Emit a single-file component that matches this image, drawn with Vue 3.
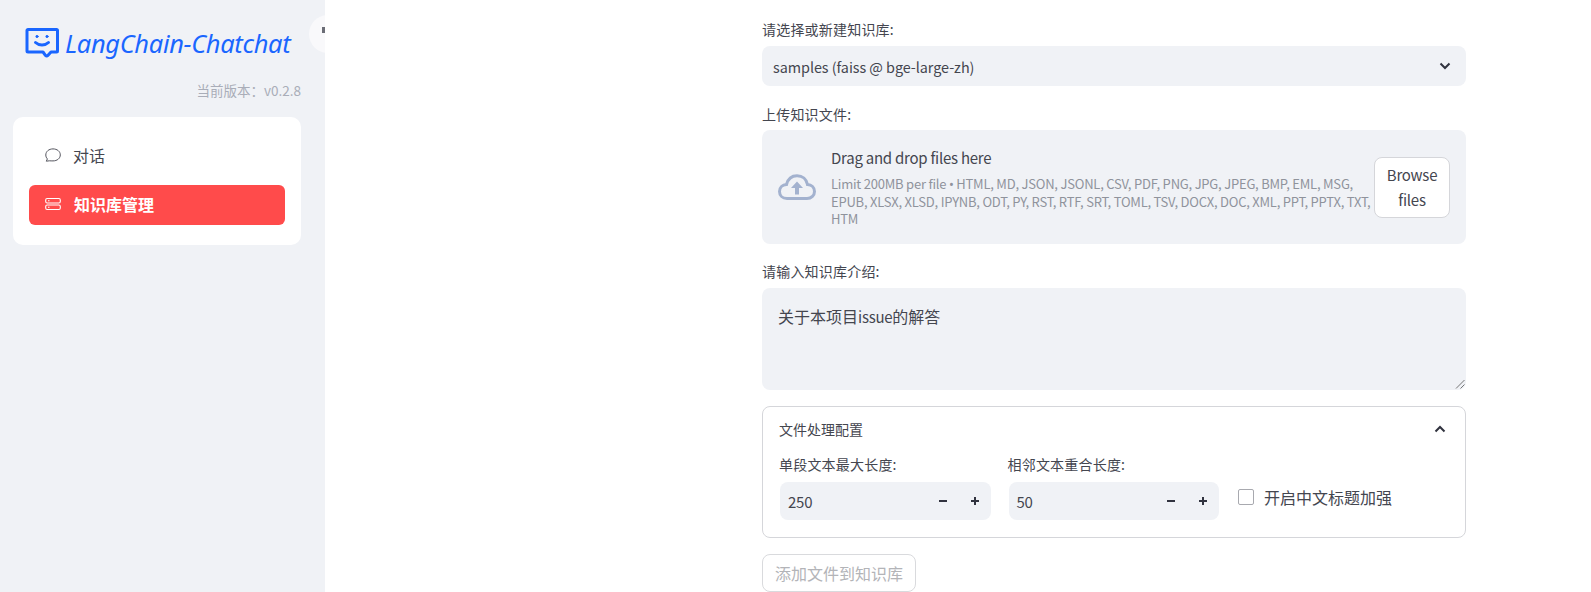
<script setup>
const limitStart = 'Limit 200MB per file'
const limitRest = 'HTML, MD, JSON, JSONL, CSV, PDF, PNG, JPG, JPEG, BMP, EML, MSG, EPUB, XLSX, XLSD, IPYNB, ODT, PY, RST, RTF, SRT, TOML, TSV, DOCX, DOC, XML, PPT, PPTX, TXT, HTM'
const numbers = [
  { label: '单段文本最大长度:', value: '250' },
  { label: '相邻文本重合长度:', value: '50' },
]
</script>

<template>
  <div class="page">
    <aside class="sidebar">
      <div class="collapse"><span class="collapse-mark"></span></div>
      <div class="logo">
        <svg class="logo-icon" viewBox="0 0 34 30" width="34" height="30" fill="none" stroke="#1a66ff" stroke-width="3" stroke-linejoin="round" stroke-linecap="round">
          <path d="M3 1.500H31.500a1 1 0 0 1 1 1V23a1 1 0 0 1-1 1H26l-3.200 3.600a1.500 1.500 0 0 1-2.200 0L18 24H3a1 1 0 0 1-1-1V2.500a1 1 0 0 1 1-1Z" />
          <path d="M10.500 14.500c3.500 3.300 9.500 3.300 13 0" />
          <circle cx="12" cy="8.500" r="1.100" fill="#1a66ff" stroke-width="1" />
          <circle cx="22" cy="8.500" r="1.100" fill="#1a66ff" stroke-width="1" />
        </svg>
        <span class="logo-text">LangChain-Chatchat</span>
      </div>
      <div class="version">当前版本：v0.2.8</div>
      <nav class="menu">
        <div class="menu-item">
          <svg viewBox="0 0 16 16" width="16" height="16" fill="none" stroke="#55565f" stroke-width="1">
            <path d="M2.600 12.200C1.500 11.100 1 9.800 1 8.300 1 4.800 4 2.200 8.200 2.200s7.300 2.600 7.300 6-3.100 6-7.300 6c-1.200 0-2.600 0-3.700-.100l-3 .4Z" transform="translate(-.2 -.3)" />
          </svg>
          <span>对话</span>
        </div>
        <div class="menu-item active">
          <svg viewBox="0 0 16 16" width="16" height="16" fill="none" stroke="#fff" stroke-width="1.100">
            <rect x="0.700" y="2.500" width="14.600" height="4.500" rx="1.400" />
            <rect x="0.700" y="9" width="14.600" height="4.500" rx="1.400" />
            <path d="M3 4.750h1.500M3 11.250h1.500" />
          </svg>
          <span>知识库管理</span>
        </div>
      </nav>
    </aside>

    <main class="main">
      <section class="column">
        <label class="label first">请选择或新建知识库:</label>
        <div class="select">
          <span class="select-value">samples (faiss @ bge-large-zh)</span>
          <svg class="chevron" viewBox="0 0 12 8" width="12" height="8" fill="none" stroke="#31333f" stroke-width="2"><path d="M1.500 1.500 6 6l4.500-4.500" /></svg>
        </div>

        <label class="label upload-label">上传知识文件:</label>
        <div class="dropzone">
          <svg class="cloud" viewBox="0 0 38 26" width="38" height="26">
            <path d="M9 24.500C4.500 24.500 1.500 21.500 1.500 17.500S4.500 10.800 8.500 10.500C10 5 14 1.800 19 1.800c5.500 0 9.500 3.500 10.500 8.700 4 .3 7 3.200 7 7S33.500 24.500 29 24.500Z" fill="none" stroke="#a3b2cf" stroke-width="3" />
            <path d="M19 7.500 25 14h-4v6.500h-4V14h-4Z" fill="#a3b2cf" />
          </svg>
          <div class="drop-text">
            <div class="drop-title latin">Drag and drop files here</div>
            <div class="drop-limit">{{ limitStart }} <span class="dot">•</span> {{ limitRest }}</div>
          </div>
          <button class="browse" type="button">Browse files</button>
        </div>

        <label class="label intro-label">请输入知识库介绍:</label>
        <div class="textarea">
          关于本项目<span class="latin">issue</span>的解答
          <svg class="grip" viewBox="0 0 10 10" width="10" height="10" stroke="#555" stroke-width="0.800"><path d="M1 9.500 9.500 1M5.500 9.500 9.500 5.500" /></svg>
        </div>

        <div class="expander">
          <div class="exp-head">
            <span>文件处理配置</span>
            <svg viewBox="0 0 12 8" width="12" height="8" fill="none" stroke="#31333f" stroke-width="2"><path d="M1.500 6.500 6 2l4.500 4.500" /></svg>
          </div>
          <div class="exp-body">
            <div v-for="n in numbers" :key="n.label" class="field">
              <label class="label field-label">{{ n.label }}</label>
              <div class="number">
                <span class="num-value latin">{{ n.value }}</span>
                <span class="step">
                  <svg viewBox="0 0 10 10" width="10" height="10" fill="#31333f"><rect x="1" y="4" width="8" height="2" /></svg>
                </span>
                <span class="step">
                  <svg viewBox="0 0 10 10" width="10" height="10" fill="#31333f"><path d="M4 1h2v3h3v2H6v3H4V6H1V4h3Z" /></svg>
                </span>
              </div>
            </div>
            <div class="check">
              <span class="box"></span>
              <span>开启中文标题加强</span>
            </div>
          </div>
        </div>

        <button class="submit" type="button" disabled>添加文件到知识库</button>
      </section>
    </main>
  </div>
</template>

<style>
html, body { margin: 0; overflow: hidden; background: #fff; }
</style>

<style scoped>
.page {
  display: flex;
  width: 1591px;
  height: 592px;
  overflow: hidden;
  color: #44464f;
  font-family: "Noto Sans CJK SC", "Noto Sans", sans-serif;
  font-size: 16px;
}
.latin {
  font-size: 15px;
  letter-spacing: -0.25px;
}
.sidebar {
  position: relative;
  box-sizing: border-box;
  flex: 0 0 325px;
  height: 592px;
  padding: 28px 24px 0 13px;
  background: #f0f2f6;
  overflow: hidden;
}
.collapse {
  position: absolute;
  left: 309px;
  top: 15px;
  width: 38px;
  height: 38px;
  border-radius: 50%;
  background: #f9f9fb;
}
.collapse-mark {
  position: absolute;
  left: 13px;
  top: 12px;
  width: 3px;
  height: 6px;
  background: #6b6d76;
}
.logo {
  display: flex;
  align-items: center;
  gap: 6px;
  height: 30px;
  margin-left: 12px;
}
.logo-icon { flex: none; }
.logo-text {
  font-family: "Noto Sans", sans-serif;
  font-style: italic;
  font-size: 25.400px;
  line-height: 30px;
  letter-spacing: -0.3px;
  color: #1a66ff;
  white-space: nowrap;
}
.version {
  margin-top: 22px;
  text-align: right;
  font-size: 13.500px;
  line-height: 20px;
  color: #a9adb8;
}
.menu {
  display: flex;
  flex-direction: column;
  gap: 9px;
  box-sizing: border-box;
  width: 288px;
  height: 128px;
  margin-top: 17px;
  padding: 19px 16px;
  border-radius: 10px;
  background: #fff;
}
.menu-item {
  display: flex;
  align-items: center;
  gap: 12px;
  box-sizing: border-box;
  height: 40px;
  padding: 0 0 2px 16px;
  border-radius: 6px;
  font-size: 16px;
  color: #44464f;
}
.menu-item.active {
  gap: 13px;
  background: #ff4b4b;
  color: #fff;
  font-weight: 700;
}
.main {
  flex: 1;
  padding-left: 437px;
}
.column {
  display: flex;
  flex-direction: column;
  width: 704px;
}
.label {
  display: block;
  font-size: 14px;
  line-height: 20px;
  letter-spacing: 0.2px;
}
.field-label { margin-left: -1px; }
.first { margin-top: 19px; }
.select {
  display: flex;
  align-items: center;
  justify-content: space-between;
  box-sizing: border-box;
  height: 40px;
  margin-top: 7px;
  padding: 0 15px 0 11px;
  border-radius: 8px;
  background: #f0f2f6;
}
.select-value {
  font-size: 14.400px;
  letter-spacing: -0.05px;
}
.upload-label { margin-top: 18px; }
.dropzone {
  display: flex;
  align-items: center;
  box-sizing: border-box;
  height: 114px;
  margin-top: 6px;
  padding: 0 16px;
  border-radius: 8px;
  background: #f0f2f6;
}
.cloud { flex: none; margin-right: 15px; }
.drop-text { flex: 1; min-width: 0; padding-bottom: 1px; }
.drop-title {
  display: block;
  line-height: 24px;
  margin-bottom: 5px;
}
.drop-limit {
  font-size: 13px;
  line-height: 17px;
  letter-spacing: -0.22px;
  color: #8f939c;
}
.dot { font-family: "Noto Sans", sans-serif; }
.browse {
  flex: none;
  box-sizing: border-box;
  width: 76px;
  height: 61px;
  padding: 0 8px;
  border: 1px solid #d5d6da;
  border-radius: 8px;
  background: #fff;
  color: #44464f;
  font: 15px/25px "Noto Sans CJK SC", sans-serif;
  letter-spacing: -0.25px;
}
.intro-label { margin-top: 17px; }
.textarea {
  position: relative;
  box-sizing: border-box;
  height: 102px;
  margin-top: 7px;
  padding: 16px;
  border-radius: 8px;
  background: #f0f2f6;
  font-size: 16px;
  line-height: 24px;
}
.grip {
  position: absolute;
  right: 1px;
  bottom: 1px;
}
.expander {
  box-sizing: border-box;
  height: 132px;
  margin-top: 16px;
  padding: 0 16px;
  border: 1px solid #d5d6da;
  border-radius: 8px;
}
.exp-head {
  display: flex;
  align-items: center;
  justify-content: space-between;
  height: 43px;
  padding-right: 3px;
  font-size: 14px;
}
.exp-body {
  display: flex;
  align-items: flex-start;
  gap: 18px;
  padding: 4px 0 0 1px;
}
.field { flex: 0 0 210.500px; }
.number {
  display: flex;
  align-items: center;
  height: 38px;
  margin-top: 8px;
  border-radius: 8px;
  background: #f0f2f6;
}
.num-value {
  flex: 1;
  padding-left: 8px;
}
.step {
  display: flex;
  align-items: center;
  justify-content: center;
  width: 32px;
  height: 32px;
}
.check {
  display: flex;
  align-items: center;
  gap: 10px;
  height: 38px;
  margin: 24px 0 0 1px;
  font-size: 16px;
  color: #44464f;
}
.box {
  box-sizing: border-box;
  width: 16px;
  height: 16px;
  border: 1px solid #a8a9af;
  border-radius: 2px;
  background: #fff;
}
.submit {
  box-sizing: border-box;
  width: 154px;
  height: 38px;
  margin-top: 16px;
  padding: 0;
  border: 1px solid #d9dadd;
  border-radius: 8px;
  background: #fff;
  color: #b3b4b8;
  font: 16px/24px "Noto Sans CJK SC", sans-serif;
}
</style>
